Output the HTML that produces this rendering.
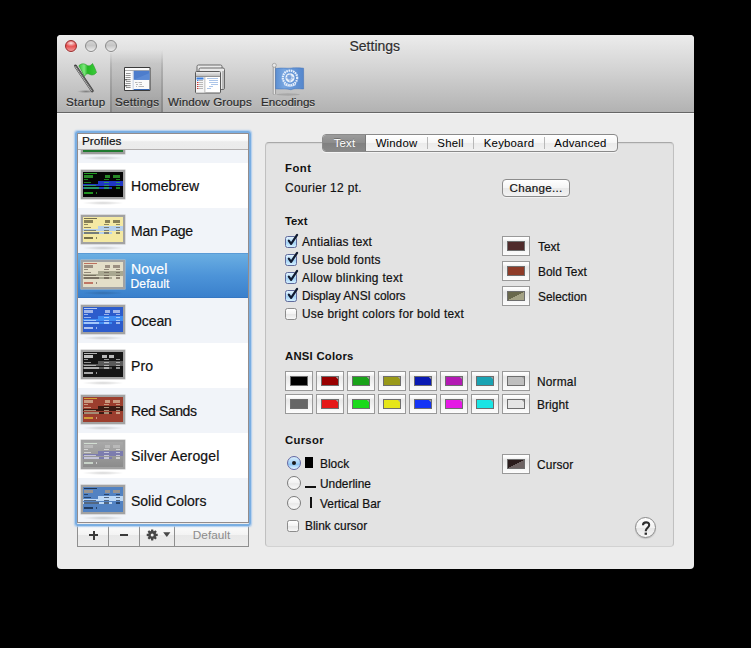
<!DOCTYPE html>
<html><head><meta charset="utf-8">
<style>
*{box-sizing:border-box}
html,body{margin:0;padding:0;width:751px;height:648px;background:#000;overflow:hidden;font-family:"Liberation Sans",sans-serif;color:#000}
.a{position:absolute}
.t{position:absolute;white-space:nowrap;line-height:1;-webkit-text-stroke:.2px currentColor}
.win{position:absolute;left:57px;top:35px;width:637px;height:534px;background:#ececec;border-radius:4px 4px 4px 4px;overflow:hidden}
.tb{position:absolute;left:57px;top:35px;width:637px;height:78px;box-shadow:0 1px 0 rgba(255,255,255,.55);background:linear-gradient(#ececec,#d3d3d3 45%,#b2b2b2);border-bottom:1px solid #666;border-radius:4px 4px 0 0}
.light{position:absolute;top:40px;width:12px;height:12px;border-radius:50%;box-shadow:0 .5px .5px rgba(255,255,255,.6)}
.tl{font-size:11.6px;color:#2a2a2a;text-shadow:0 1px 0 rgba(255,255,255,.45)}
/* profiles list */
.ring{position:absolute;left:75px;top:131px;width:176px;height:395px;border:2px solid #7aaee2;border-radius:3px;box-shadow:0 0 1.5px 0.5px #a9caee;z-index:2}
.list{position:absolute;left:77px;top:133px;width:172px;height:390px;background:#fff;overflow:hidden}
.lborder{position:absolute;left:77px;top:133px;width:172px;height:390px;border:1px solid #938c8c;z-index:1}
.hdr{position:absolute;left:0;top:0;width:172px;height:17px;background:linear-gradient(#ffffff,#fafafa 45%,#ececec 55%,#ebebeb);border-bottom:1px solid #b3b0b0}
.row{position:absolute;left:0;width:172px;height:45px}
.odd{background:#f1f4f9}
.thumb{position:absolute;left:4px;top:7px;width:44px;height:29px;border:2px solid #a2a2a2;box-shadow:inset 0 0 0 .5px #c8c8c8,0 0 0 .5px #c0c0c0}
.thumb>div{filter:blur(.25px)}
.shadow{position:absolute;left:5px;top:38px;width:42px;height:4px;border-radius:50%;background:radial-gradient(ellipse at center,rgba(0,0,0,.16),rgba(0,0,0,0) 70%)}
.pn{position:absolute;left:54px;letter-spacing:.15px;font-size:14px;color:#111}
/* buttons */
.seg{position:absolute;top:524px;height:23px;background:linear-gradient(#fdfdfd,#f3f3f3 50%,#e8e8e8 52%,#ececec);border:1px solid #8f8f8f;border-top:none}
/* tab box */
.box{position:absolute;left:265px;top:142px;width:409px;height:405px;background:#e3e3e3;border:1px solid #c0c0c0;border-top-color:#a8a8a8;border-bottom-color:#d2d2d2;border-radius:4px;box-shadow:inset 0 1px 1px rgba(0,0,0,.06)}
.tabs{position:absolute;left:322px;top:134px;width:296px;height:18px;border:1px solid #8a8a8a;border-radius:4px;background:linear-gradient(#ffffff,#f6f6f6 50%,#ebebeb 52%,#f2f2f2);overflow:hidden;box-shadow:0 1px 0 rgba(255,255,255,.6)}
.tab{position:absolute;top:0;height:16px;font-size:11.4px;text-align:center;line-height:16px;letter-spacing:.2px}
.h{font-size:11.3px;font-weight:bold;color:#111;-webkit-text-stroke:0}
.l{font-size:11.9px;color:#111}
.cb{position:absolute;width:12px;height:12px;border:1px solid #5f6a9c;border-radius:2.5px;background:linear-gradient(#e2f3fe,#b5dcf8 45%,#a6d4f7 55%,#d2eefe)}
.cbo{border-color:#8c8c8c;background:linear-gradient(#ffffff,#f3f3f3 50%,#e8e8e8 55%,#f7f7f7)}
.well{position:absolute;width:28px;height:20px;border:1px solid #999;background:linear-gradient(#ffffff 0,#fbfbfb 12%,#e8e8e8 28%,#eeeeee 50%,#f6f6f6 75%,#fcfcfc)}
.sw{position:absolute;left:4px;top:4px;width:18px;height:10px;border:1px solid #6e6e6e}
.aw{height:20px}
.aw .sw{top:4px;height:10px}
.radio{position:absolute;width:14px;height:14px;border-radius:50%;border:1px solid #7c7c7c;background:linear-gradient(#fdfdfd,#f2f2f2 50%,#e9e9e9 55%,#fafafa)}
</style></head><body>
<div class="win"></div>
<div class="tb"></div>
<!-- selected toolbar item -->
<div class="a" style="left:110px;top:50px;width:53px;height:62px;background:linear-gradient(rgba(0,0,0,0),rgba(0,0,0,.08) 22%,rgba(0,0,0,.12));"></div>
<div class="a" style="left:110px;top:50px;width:2px;height:62px;background:linear-gradient(rgba(0,0,0,0),rgba(0,0,0,.10) 30%,rgba(0,0,0,.14))"></div>
<div class="a" style="left:161px;top:50px;width:2px;height:62px;background:linear-gradient(rgba(0,0,0,0),rgba(0,0,0,.10) 30%,rgba(0,0,0,.14))"></div>
<div class="light" style="left:65px;background:radial-gradient(ellipse 60% 35% at 50% 22%,rgba(255,255,255,.85),rgba(255,255,255,0) 100%),linear-gradient(#d83a3a,#e64646 45%,#f09a9a);border:1px solid #9a2a2a"></div>
<div class="light" style="left:85px;background:linear-gradient(#d3d3d3,#c6c6c6 45%,#ececec);border:1px solid #8a8a8a"></div>
<div class="light" style="left:105px;background:linear-gradient(#d3d3d3,#c6c6c6 45%,#ececec);border:1px solid #8a8a8a"></div>
<div class="t" style="left:349.5px;top:38.5px;font-size:14px;color:#2e2e2e;text-shadow:0 1px 0 rgba(255,255,255,.5)">Settings</div>
<!-- ICONS -->

<svg class="a" style="left:66px;top:60px" width="36" height="36" viewBox="0 0 36 36">
  <defs>
    <linearGradient id="pole" x1="0" y1="0" x2="1" y2="0"><stop offset="0" stop-color="#f2f2f2"/><stop offset=".5" stop-color="#8a8a8a"/><stop offset="1" stop-color="#3a3a3a"/></linearGradient>
    <linearGradient id="gflag" x1="0" y1="0" x2="1" y2="0"><stop offset="0" stop-color="#2ec82e"/><stop offset=".3" stop-color="#7ee57e"/><stop offset=".5" stop-color="#22b822"/><stop offset="1" stop-color="#3ccc3c"/></linearGradient>
    <radialGradient id="fsh"><stop offset="0" stop-color="#000" stop-opacity=".35"/><stop offset="1" stop-color="#000" stop-opacity="0"/></radialGradient>
  </defs>
  <ellipse cx="20" cy="31.5" rx="9" ry="1.6" fill="url(#fsh)"/>
  <path d="M9.4 5.9 L26.3 30.9" stroke="#3e3e3e" stroke-width="2.8" stroke-linecap="round"/>
  <path d="M9.0 6.3 L25.7 31.0" stroke="#d8d8d8" stroke-width=".9" stroke-linecap="round" opacity=".9"/><path d="M9.9 6.0 L26.6 30.6" stroke="#777" stroke-width=".8"/>
  <path d="M12.8 5.8 C15 3.5 18 3.2 20.5 5 C22.5 6.5 24.5 6 26.5 3.5 C28 6 29.5 9.5 30.5 12.5 C28.5 15 26 15.5 24 14.5 C21.5 13 19.5 14 18.5 16.5 C16.8 12.8 14.8 9.2 12.8 5.8 Z" fill="url(#gflag)" stroke="#2a9a2a" stroke-width=".6"/>
</svg>
<svg class="a" style="left:122px;top:65px" width="30" height="28" viewBox="0 0 30 28">
  <rect x="2" y="2" width="26.5" height="24" rx="1.2" fill="#3a3a3a"/>
  <rect x="3" y="3" width="24.5" height="22" fill="#fafafa"/>
  <rect x="3" y="5" width="24.5" height=".8" fill="#9a9a9a"/>
  <rect x="10.6" y="5.8" width="1.1" height="19.2" fill="#c9d3e3"/>
  <rect x="11.7" y="5.8" width="15.8" height="9" fill="#4d7dcc"/>
  <path d="M11.7 14.8 L27.5 8 L27.5 14.8 Z" fill="#5b8ad4"/>
  <rect x="11.7" y="24" width="15.8" height="1" fill="#3467b8"/>
  <g fill="#6a6a6a"><rect x="4" y="8" width="4.6" height=".7"/><rect x="3.5" y="10.2" width="5.1" height=".7"/><rect x="3.5" y="12.2" width="5.1" height=".7"/><rect x="4.6" y="14.3" width="4" height=".8"/><rect x="4" y="16.2" width="4.6" height=".7"/><rect x="3.5" y="18.2" width="5.1" height=".7"/><rect x="4.6" y="20.3" width="4" height=".8"/><rect x="4" y="22.1" width="4.6" height=".7"/></g>
  <g fill="#222"><circle cx="4" cy="14.7" r=".8"/><circle cx="4" cy="20.7" r=".8"/></g>
  <g fill="#9c9c9c"><rect x="13" y="17" width="2.5" height=".7"/><rect x="16.5" y="17" width="3.5" height=".7"/><rect x="14" y="19" width="2" height=".7"/><rect x="17.5" y="19" width="2.5" height=".7"/><rect x="14" y="21" width="1" height=".7"/><rect x="16.5" y="21" width="5.5" height=".7"/></g>
</svg>
<svg class="a" style="left:192px;top:62px" width="36" height="34" viewBox="0 0 36 34">
  <defs><linearGradient id="wgt" x1="0" y1="0" x2="0" y2="1"><stop offset="0" stop-color="#ededed"/><stop offset="1" stop-color="#bdbdbd"/></linearGradient></defs>
  <rect x="5" y="3" width="25" height="21" rx="1.5" fill="url(#wgt)" stroke="#6a6a6a" stroke-width="1"/>
  <rect x="7" y="6" width="25.5" height="21.5" rx="1.5" fill="#e9e9e9" stroke="#6a6a6a" stroke-width="1"/>
  <rect x="30" y="9" width="2" height="18" fill="#bbb"/>
  <rect x="3.5" y="9.5" width="25" height="21.5" rx="1" fill="#fff" stroke="#5a5a5a" stroke-width="1"/>
  <rect x="4" y="10" width="24" height="4" fill="url(#wgt)"/>
  <rect x="4" y="14" width="24" height=".8" fill="#777"/>
  <rect x="4" y="15" width="8" height="15.5" fill="#f5f5f5"/>
  <rect x="12" y="15" width="1.5" height="15.5" fill="#d0d0d0"/>
  <rect x="4.5" y="15.5" width="7" height="2" fill="#3a7fe0"/>
  <g fill="#cc3333"><rect x="5" y="20" width="1.5" height="1"/><rect x="5" y="22" width="1.5" height="1"/><rect x="5" y="24" width="1.5" height="1"/><rect x="5" y="26" width="1.5" height="1"/></g>
  <rect x="5" y="18" width="1.5" height="1" fill="#3a7fe0"/>
  <g fill="#aaa"><rect x="7" y="18" width="4" height=".8"/><rect x="7" y="20" width="4" height=".8"/><rect x="7" y="22" width="4" height=".8"/><rect x="7" y="24" width="4" height=".8"/><rect x="7" y="26" width="4" height=".8"/></g>
  <g fill="#8aaee0"><rect x="15" y="16.3" width="11" height=".7"/><rect x="17" y="18.3" width="9" height=".7"/><rect x="17" y="20.3" width="9" height=".7"/><rect x="19" y="22.3" width="7" height=".7"/><rect x="17" y="24.3" width="4" height=".7"/><rect x="15" y="26.3" width="4" height=".7"/></g>
</svg>
<svg class="a" style="left:270px;top:62px" width="36" height="34" viewBox="0 0 36 34">
  <defs>
    <linearGradient id="upole" x1="0" y1="0" x2="1" y2="0"><stop offset="0" stop-color="#9a9a9a"/><stop offset=".5" stop-color="#f4f4f4"/><stop offset="1" stop-color="#8a8a8a"/></linearGradient>
    <linearGradient id="uflag" x1="0" y1="0" x2="1" y2="0"><stop offset="0" stop-color="#5c8fd2"/><stop offset=".3" stop-color="#78a6e0"/><stop offset=".6" stop-color="#6697d8"/><stop offset="1" stop-color="#5486cc"/></linearGradient>
  </defs>
  <ellipse cx="18" cy="32.5" rx="12" ry="1.2" fill="#000" opacity=".12"/>
  <rect x="3" y="4" width="2.6" height="28.5" rx="1" fill="url(#upole)" stroke="#888" stroke-width=".4"/>
  <circle cx="4.3" cy="3.3" r="2" fill="#e8e8e8" stroke="#8a8a8a" stroke-width=".6"/>
  <path d="M5.6 6.5 C12 5.5 16 6.5 20 6.2 C24 5.8 27 5.6 33.6 6.2 L33.6 27 C27 26.6 24 26.4 21 27.8 C17 26.3 12 27.3 5.6 26.8 Z" fill="url(#uflag)" stroke="#3f6fb5" stroke-width=".5"/>
  <circle cx="20" cy="15.8" r="7.2" fill="none" stroke="#f4f8ff" stroke-width="2.2" stroke-dasharray="1.6 .7" opacity=".9"/>
  <circle cx="20" cy="15.8" r="4.6" fill="#eef4fc"/>
  <path d="M15.6 15.8 H24.4 M20 11.2 V20.4" stroke="#7aa2da" stroke-width=".7"/>
  <circle cx="20" cy="15.8" r="2.4" fill="none" stroke="#7aa2da" stroke-width=".6"/>
  <path d="M17 13.5 L19 12.8 L21.5 14.5 L20.5 17.5 L18 17 Z" fill="#6a96d6" opacity=".8"/>
  <path d="M14 22.5 Q20 26 26 22.5" fill="none" stroke="#f4f8ff" stroke-width="1" opacity=".8"/>
</svg>

<div class="t tl" style="left:66px;top:96px;letter-spacing:.3px">Startup</div>
<div class="t tl" style="left:115px;top:96px;letter-spacing:.3px">Settings</div>
<div class="t tl" style="left:168px;top:96px;letter-spacing:.1px">Window Groups</div>
<div class="t tl" style="left:261px;top:96px">Encodings</div>

<!-- profiles -->
<div class="ring"></div><div class="lborder"></div>
<div class="list">
  <div class="row odd" style="top:-15px"><div class="thumb" style="background:#111;border-bottom-color:#9c9c9c"><div class="a" style="left:0;bottom:0;width:40px;height:3px;background:#1f7a30"></div></div><div class="shadow"></div></div>
  <div class="hdr"><div class="t" style="left:5px;top:2.6px;font-size:11.8px;color:#111">Profiles</div></div>
  <div class="row" style="top:30px"><div class="thumb"><div class="a" style="left:0;top:0;width:40px;height:25px;background:#050505;overflow:hidden"><div class="a" style="left:15px;top:9px;width:25px;height:2.8px;background:#1f36c4;opacity:1"></div><div class="a" style="left:0px;top:11.7px;width:40px;height:2.8px;background:#1f36c4;opacity:1"></div><div class="a" style="left:0px;top:14.5px;width:29px;height:2.6px;background:#1f36c4;opacity:1"></div><div class="a" style="left:1.4px;top:1.2px;width:12.5px;height:1.2px;background:#2fd22f;opacity:0.75"></div><div class="a" style="left:1.4px;top:3.3px;width:8.6px;height:2.6px;background:#3ee03e;opacity:0.6"></div><div class="a" style="left:21.9px;top:3.3px;width:5.4px;height:2.6px;background:#3ee03e;opacity:0.6"></div><div class="a" style="left:29.9px;top:3.3px;width:7px;height:2.6px;background:#3ee03e;opacity:0.6"></div><div class="a" style="left:1.4px;top:7px;width:3.6px;height:1.2px;background:#2fd22f;opacity:0.6"></div><div class="a" style="left:21.2px;top:7px;width:4.5px;height:1.2px;background:#2fd22f;opacity:0.6"></div><div class="a" style="left:33.4px;top:7px;width:3.5px;height:1.2px;background:#2fd22f;opacity:0.6"></div><div class="a" style="left:1.4px;top:10.2px;width:6.7px;height:1.2px;background:#2fd22f;opacity:0.6"></div><div class="a" style="left:21.2px;top:10.2px;width:4.5px;height:1.2px;background:#2fd22f;opacity:0.6"></div><div class="a" style="left:33.4px;top:10.2px;width:3.5px;height:1.2px;background:#2fd22f;opacity:0.6"></div><div class="a" style="left:1.4px;top:12.8px;width:11.9px;height:1.2px;background:#2fd22f;opacity:0.6"></div><div class="a" style="left:21.2px;top:12.8px;width:4.5px;height:1.2px;background:#2fd22f;opacity:0.6"></div><div class="a" style="left:33.4px;top:12.8px;width:3.5px;height:1.2px;background:#2fd22f;opacity:0.6"></div><div class="a" style="left:1.4px;top:15.4px;width:14.5px;height:1.2px;background:#2fd22f;opacity:0.6"></div><div class="a" style="left:21.2px;top:15.4px;width:4.5px;height:1.2px;background:#2fd22f;opacity:0.6"></div><div class="a" style="left:33.4px;top:15.4px;width:3.5px;height:1.2px;background:#2fd22f;opacity:0.6"></div><div class="a" style="left:1.4px;top:20.4px;width:9px;height:1.4px;background:#2fd22f;opacity:0.7"></div><div class="a" style="left:12.5px;top:20.4px;width:1.5px;height:1.4px;background:#2fd22f;opacity:0.6"></div></div></div><div class="shadow"></div><div class="t pn" style="top:16px;letter-spacing:0.06px">Homebrew</div></div><div class="row odd" style="top:75px"><div class="thumb"><div class="a" style="left:0;top:0;width:40px;height:25px;background:#f4e9a3;overflow:hidden"><div class="a" style="left:15px;top:9px;width:25px;height:2.8px;background:#b6d0ec;opacity:1"></div><div class="a" style="left:0px;top:11.7px;width:40px;height:2.8px;background:#b6d0ec;opacity:1"></div><div class="a" style="left:0px;top:14.5px;width:29px;height:2.6px;background:#b6d0ec;opacity:1"></div><div class="a" style="left:1.4px;top:1.2px;width:12.5px;height:1.2px;background:#4a4630;opacity:0.75"></div><div class="a" style="left:1.4px;top:3.3px;width:8.6px;height:2.6px;background:#3e3a24;opacity:0.6"></div><div class="a" style="left:21.9px;top:3.3px;width:5.4px;height:2.6px;background:#3e3a24;opacity:0.6"></div><div class="a" style="left:29.9px;top:3.3px;width:7px;height:2.6px;background:#3e3a24;opacity:0.6"></div><div class="a" style="left:1.4px;top:7px;width:3.6px;height:1.2px;background:#4a4630;opacity:0.6"></div><div class="a" style="left:21.2px;top:7px;width:4.5px;height:1.2px;background:#4a4630;opacity:0.6"></div><div class="a" style="left:33.4px;top:7px;width:3.5px;height:1.2px;background:#4a4630;opacity:0.6"></div><div class="a" style="left:1.4px;top:10.2px;width:6.7px;height:1.2px;background:#4a4630;opacity:0.6"></div><div class="a" style="left:21.2px;top:10.2px;width:4.5px;height:1.2px;background:#4a4630;opacity:0.6"></div><div class="a" style="left:33.4px;top:10.2px;width:3.5px;height:1.2px;background:#4a4630;opacity:0.6"></div><div class="a" style="left:1.4px;top:12.8px;width:11.9px;height:1.2px;background:#4a4630;opacity:0.6"></div><div class="a" style="left:21.2px;top:12.8px;width:4.5px;height:1.2px;background:#4a4630;opacity:0.6"></div><div class="a" style="left:33.4px;top:12.8px;width:3.5px;height:1.2px;background:#4a4630;opacity:0.6"></div><div class="a" style="left:1.4px;top:15.4px;width:14.5px;height:1.2px;background:#4a4630;opacity:0.6"></div><div class="a" style="left:21.2px;top:15.4px;width:4.5px;height:1.2px;background:#4a4630;opacity:0.6"></div><div class="a" style="left:33.4px;top:15.4px;width:3.5px;height:1.2px;background:#4a4630;opacity:0.6"></div><div class="a" style="left:1.4px;top:20.4px;width:9px;height:1.4px;background:#3e3a24;opacity:0.7"></div><div class="a" style="left:12.5px;top:20.4px;width:1.5px;height:1.4px;background:#4a4630;opacity:0.6"></div></div></div><div class="shadow"></div><div class="t pn" style="top:16px;letter-spacing:-0.25px">Man Page</div></div><div class="row" style="top:120px;background:linear-gradient(#6aaee2,#4d94d8 50%,#3a80cc);border-top:1px solid #5a9bd6;border-bottom:1px solid #3577c2"><div class="thumb" style="top:6px"><div class="a" style="left:0;top:0;width:40px;height:25px;background:#e3dec8;overflow:hidden"><div class="a" style="left:15px;top:9px;width:25px;height:2.8px;background:#a9a891;opacity:1"></div><div class="a" style="left:0px;top:11.7px;width:40px;height:2.8px;background:#a9a891;opacity:1"></div><div class="a" style="left:0px;top:14.5px;width:29px;height:2.6px;background:#a9a891;opacity:1"></div><div class="a" style="left:1.4px;top:1.2px;width:12.5px;height:1.2px;background:#b04a3a;opacity:0.75"></div><div class="a" style="left:1.4px;top:3.3px;width:8.6px;height:2.6px;background:#6a5a52;opacity:0.6"></div><div class="a" style="left:21.9px;top:3.3px;width:5.4px;height:2.6px;background:#6a5a52;opacity:0.6"></div><div class="a" style="left:29.9px;top:3.3px;width:7px;height:2.6px;background:#6a5a52;opacity:0.6"></div><div class="a" style="left:1.4px;top:7px;width:3.6px;height:1.2px;background:#5a4c42;opacity:0.6"></div><div class="a" style="left:21.2px;top:7px;width:4.5px;height:1.2px;background:#5a4c42;opacity:0.6"></div><div class="a" style="left:33.4px;top:7px;width:3.5px;height:1.2px;background:#5a4c42;opacity:0.6"></div><div class="a" style="left:1.4px;top:10.2px;width:6.7px;height:1.2px;background:#5a4c42;opacity:0.6"></div><div class="a" style="left:21.2px;top:10.2px;width:4.5px;height:1.2px;background:#5a4c42;opacity:0.6"></div><div class="a" style="left:33.4px;top:10.2px;width:3.5px;height:1.2px;background:#5a4c42;opacity:0.6"></div><div class="a" style="left:1.4px;top:12.8px;width:11.9px;height:1.2px;background:#5a4c42;opacity:0.6"></div><div class="a" style="left:21.2px;top:12.8px;width:4.5px;height:1.2px;background:#5a4c42;opacity:0.6"></div><div class="a" style="left:33.4px;top:12.8px;width:3.5px;height:1.2px;background:#5a4c42;opacity:0.6"></div><div class="a" style="left:1.4px;top:15.4px;width:14.5px;height:1.2px;background:#5a4c42;opacity:0.6"></div><div class="a" style="left:21.2px;top:15.4px;width:4.5px;height:1.2px;background:#5a4c42;opacity:0.6"></div><div class="a" style="left:33.4px;top:15.4px;width:3.5px;height:1.2px;background:#5a4c42;opacity:0.6"></div><div class="a" style="left:1.4px;top:20.4px;width:9px;height:1.4px;background:#b04a3a;opacity:0.7"></div><div class="a" style="left:12.5px;top:20.4px;width:1.5px;height:1.4px;background:#5a4c42;opacity:0.6"></div></div></div><div class="shadow" style="top:37px"></div><div class="t pn" style="top:8px;color:#fff">Novel</div><div class="t" style="left:53.5px;top:24px;font-size:12.1px;letter-spacing:.1px;color:#fff">Default</div></div><div class="row odd" style="top:165px"><div class="thumb"><div class="a" style="left:0;top:0;width:40px;height:25px;background:#2c5ccc;overflow:hidden"><div class="a" style="left:15px;top:9px;width:25px;height:2.8px;background:#3f8cf2;opacity:1"></div><div class="a" style="left:0px;top:11.7px;width:40px;height:2.8px;background:#3f8cf2;opacity:1"></div><div class="a" style="left:0px;top:14.5px;width:29px;height:2.6px;background:#3f8cf2;opacity:1"></div><div class="a" style="left:1.4px;top:1.2px;width:12.5px;height:1.2px;background:#e6eeff;opacity:0.75"></div><div class="a" style="left:1.4px;top:3.3px;width:8.6px;height:2.6px;background:#f0f4ff;opacity:0.6"></div><div class="a" style="left:21.9px;top:3.3px;width:5.4px;height:2.6px;background:#f0f4ff;opacity:0.6"></div><div class="a" style="left:29.9px;top:3.3px;width:7px;height:2.6px;background:#f0f4ff;opacity:0.6"></div><div class="a" style="left:1.4px;top:7px;width:3.6px;height:1.2px;background:#e6eeff;opacity:0.6"></div><div class="a" style="left:21.2px;top:7px;width:4.5px;height:1.2px;background:#e6eeff;opacity:0.6"></div><div class="a" style="left:33.4px;top:7px;width:3.5px;height:1.2px;background:#e6eeff;opacity:0.6"></div><div class="a" style="left:1.4px;top:10.2px;width:6.7px;height:1.2px;background:#e6eeff;opacity:0.6"></div><div class="a" style="left:21.2px;top:10.2px;width:4.5px;height:1.2px;background:#e6eeff;opacity:0.6"></div><div class="a" style="left:33.4px;top:10.2px;width:3.5px;height:1.2px;background:#e6eeff;opacity:0.6"></div><div class="a" style="left:1.4px;top:12.8px;width:11.9px;height:1.2px;background:#e6eeff;opacity:0.6"></div><div class="a" style="left:21.2px;top:12.8px;width:4.5px;height:1.2px;background:#e6eeff;opacity:0.6"></div><div class="a" style="left:33.4px;top:12.8px;width:3.5px;height:1.2px;background:#e6eeff;opacity:0.6"></div><div class="a" style="left:1.4px;top:15.4px;width:14.5px;height:1.2px;background:#e6eeff;opacity:0.6"></div><div class="a" style="left:21.2px;top:15.4px;width:4.5px;height:1.2px;background:#e6eeff;opacity:0.6"></div><div class="a" style="left:33.4px;top:15.4px;width:3.5px;height:1.2px;background:#e6eeff;opacity:0.6"></div><div class="a" style="left:1.4px;top:20.4px;width:9px;height:1.4px;background:#e6eeff;opacity:0.7"></div><div class="a" style="left:12.5px;top:20.4px;width:1.5px;height:1.4px;background:#e6eeff;opacity:0.6"></div></div></div><div class="shadow"></div><div class="t pn" style="top:16px;letter-spacing:-0.1px">Ocean</div></div><div class="row" style="top:210px"><div class="thumb"><div class="a" style="left:0;top:0;width:40px;height:25px;background:#161616;overflow:hidden"><div class="a" style="left:15px;top:9px;width:25px;height:2.8px;background:#5a5a5a;opacity:1"></div><div class="a" style="left:0px;top:11.7px;width:40px;height:2.8px;background:#5a5a5a;opacity:1"></div><div class="a" style="left:0px;top:14.5px;width:29px;height:2.6px;background:#5a5a5a;opacity:1"></div><div class="a" style="left:1.4px;top:1.2px;width:12.5px;height:1.2px;background:#e8e8e8;opacity:0.75"></div><div class="a" style="left:1.4px;top:2.8px;width:9px;height:3.4px;background:#f0f0f0;opacity:0.8"></div><div class="a" style="left:19px;top:3.3px;width:5px;height:2.4px;background:#f0f0f0;opacity:0.75"></div><div class="a" style="left:25.5px;top:3.3px;width:5.5px;height:2.4px;background:#f0f0f0;opacity:0.75"></div><div class="a" style="left:1.4px;top:7px;width:3.6px;height:1.2px;background:#e8e8e8;opacity:0.6"></div><div class="a" style="left:21.2px;top:7px;width:4.5px;height:1.2px;background:#e8e8e8;opacity:0.6"></div><div class="a" style="left:33.4px;top:7px;width:3.5px;height:1.2px;background:#e8e8e8;opacity:0.6"></div><div class="a" style="left:1.4px;top:10.2px;width:6.7px;height:1.2px;background:#e8e8e8;opacity:0.6"></div><div class="a" style="left:21.2px;top:10.2px;width:4.5px;height:1.2px;background:#e8e8e8;opacity:0.6"></div><div class="a" style="left:33.4px;top:10.2px;width:3.5px;height:1.2px;background:#e8e8e8;opacity:0.6"></div><div class="a" style="left:1.4px;top:12.8px;width:11.9px;height:1.2px;background:#e8e8e8;opacity:0.6"></div><div class="a" style="left:21.2px;top:12.8px;width:4.5px;height:1.2px;background:#e8e8e8;opacity:0.6"></div><div class="a" style="left:33.4px;top:12.8px;width:3.5px;height:1.2px;background:#e8e8e8;opacity:0.6"></div><div class="a" style="left:1.4px;top:15.4px;width:14.5px;height:1.2px;background:#e8e8e8;opacity:0.6"></div><div class="a" style="left:21.2px;top:15.4px;width:4.5px;height:1.2px;background:#e8e8e8;opacity:0.6"></div><div class="a" style="left:33.4px;top:15.4px;width:3.5px;height:1.2px;background:#e8e8e8;opacity:0.6"></div><div class="a" style="left:1.4px;top:20.4px;width:9px;height:1.4px;background:#e8e8e8;opacity:0.7"></div><div class="a" style="left:12.5px;top:20.4px;width:1.5px;height:1.4px;background:#e8e8e8;opacity:0.6"></div></div></div><div class="shadow"></div><div class="t pn" style="top:16px;letter-spacing:0.15px">Pro</div></div><div class="row odd" style="top:255px"><div class="thumb"><div class="a" style="left:0;top:0;width:40px;height:25px;background:#9c3e2e;overflow:hidden"><div class="a" style="left:15px;top:9px;width:25px;height:2.8px;background:#3a1a12;opacity:1"></div><div class="a" style="left:0px;top:11.7px;width:40px;height:2.8px;background:#3a1a12;opacity:1"></div><div class="a" style="left:0px;top:14.5px;width:29px;height:2.6px;background:#3a1a12;opacity:1"></div><div class="a" style="left:1.4px;top:1.2px;width:12.5px;height:1.2px;background:#e8c23a;opacity:0.75"></div><div class="a" style="left:1.4px;top:3.3px;width:8.6px;height:2.6px;background:#eadbb8;opacity:0.6"></div><div class="a" style="left:21.9px;top:3.3px;width:5.4px;height:2.6px;background:#eadbb8;opacity:0.6"></div><div class="a" style="left:29.9px;top:3.3px;width:7px;height:2.6px;background:#eadbb8;opacity:0.6"></div><div class="a" style="left:1.4px;top:7px;width:3.6px;height:1.2px;background:#eadbb8;opacity:0.6"></div><div class="a" style="left:21.2px;top:7px;width:4.5px;height:1.2px;background:#eadbb8;opacity:0.6"></div><div class="a" style="left:33.4px;top:7px;width:3.5px;height:1.2px;background:#eadbb8;opacity:0.6"></div><div class="a" style="left:1.4px;top:10.2px;width:6.7px;height:1.2px;background:#eadbb8;opacity:0.6"></div><div class="a" style="left:21.2px;top:10.2px;width:4.5px;height:1.2px;background:#eadbb8;opacity:0.6"></div><div class="a" style="left:33.4px;top:10.2px;width:3.5px;height:1.2px;background:#eadbb8;opacity:0.6"></div><div class="a" style="left:1.4px;top:12.8px;width:11.9px;height:1.2px;background:#eadbb8;opacity:0.6"></div><div class="a" style="left:21.2px;top:12.8px;width:4.5px;height:1.2px;background:#eadbb8;opacity:0.6"></div><div class="a" style="left:33.4px;top:12.8px;width:3.5px;height:1.2px;background:#eadbb8;opacity:0.6"></div><div class="a" style="left:1.4px;top:15.4px;width:14.5px;height:1.2px;background:#eadbb8;opacity:0.6"></div><div class="a" style="left:21.2px;top:15.4px;width:4.5px;height:1.2px;background:#eadbb8;opacity:0.6"></div><div class="a" style="left:33.4px;top:15.4px;width:3.5px;height:1.2px;background:#eadbb8;opacity:0.6"></div><div class="a" style="left:1.4px;top:20.4px;width:9px;height:1.4px;background:#e8c23a;opacity:0.7"></div><div class="a" style="left:12.5px;top:20.4px;width:1.5px;height:1.4px;background:#eadbb8;opacity:0.6"></div></div></div><div class="shadow"></div><div class="t pn" style="top:16px;letter-spacing:-0.42px">Red Sands</div></div><div class="row" style="top:300px"><div class="thumb"><div class="a" style="left:0;top:0;width:40px;height:25px;background:linear-gradient(#a9a9a9,#8c8c8c);overflow:hidden"><div class="a" style="left:15px;top:9px;width:25px;height:2.8px;background:#7c7cae;opacity:1"></div><div class="a" style="left:0px;top:11.7px;width:40px;height:2.8px;background:#7c7cae;opacity:1"></div><div class="a" style="left:0px;top:14.5px;width:29px;height:2.6px;background:#7c7cae;opacity:1"></div><div class="a" style="left:1.4px;top:1.2px;width:12.5px;height:1.2px;background:#e0f0e0;opacity:0.75"></div><div class="a" style="left:1.4px;top:3.3px;width:8.6px;height:2.6px;background:#c8c8c8;opacity:0.6"></div><div class="a" style="left:21.9px;top:3.3px;width:5.4px;height:2.6px;background:#c8c8c8;opacity:0.6"></div><div class="a" style="left:29.9px;top:3.3px;width:7px;height:2.6px;background:#c8c8c8;opacity:0.6"></div><div class="a" style="left:1.4px;top:7px;width:3.6px;height:1.2px;background:#f4f4f4;opacity:0.6"></div><div class="a" style="left:21.2px;top:7px;width:4.5px;height:1.2px;background:#f4f4f4;opacity:0.6"></div><div class="a" style="left:33.4px;top:7px;width:3.5px;height:1.2px;background:#f4f4f4;opacity:0.6"></div><div class="a" style="left:1.4px;top:10.2px;width:6.7px;height:1.2px;background:#f4f4f4;opacity:0.6"></div><div class="a" style="left:21.2px;top:10.2px;width:4.5px;height:1.2px;background:#f4f4f4;opacity:0.6"></div><div class="a" style="left:33.4px;top:10.2px;width:3.5px;height:1.2px;background:#f4f4f4;opacity:0.6"></div><div class="a" style="left:1.4px;top:12.8px;width:11.9px;height:1.2px;background:#f4f4f4;opacity:0.6"></div><div class="a" style="left:21.2px;top:12.8px;width:4.5px;height:1.2px;background:#f4f4f4;opacity:0.6"></div><div class="a" style="left:33.4px;top:12.8px;width:3.5px;height:1.2px;background:#f4f4f4;opacity:0.6"></div><div class="a" style="left:1.4px;top:15.4px;width:14.5px;height:1.2px;background:#f4f4f4;opacity:0.6"></div><div class="a" style="left:21.2px;top:15.4px;width:4.5px;height:1.2px;background:#f4f4f4;opacity:0.6"></div><div class="a" style="left:33.4px;top:15.4px;width:3.5px;height:1.2px;background:#f4f4f4;opacity:0.6"></div><div class="a" style="left:1.4px;top:20.4px;width:9px;height:1.4px;background:#e0f0e0;opacity:0.7"></div><div class="a" style="left:12.5px;top:20.4px;width:1.5px;height:1.4px;background:#f4f4f4;opacity:0.6"></div></div></div><div class="shadow"></div><div class="t pn" style="top:16px;letter-spacing:0.15px">Silver Aerogel</div></div><div class="row odd" style="top:345px"><div class="thumb"><div class="a" style="left:0;top:0;width:40px;height:25px;background:#5282c2;overflow:hidden"><div class="a" style="left:15px;top:9px;width:25px;height:2.8px;background:#bcd8f6;opacity:1"></div><div class="a" style="left:0px;top:11.7px;width:40px;height:2.8px;background:#bcd8f6;opacity:1"></div><div class="a" style="left:0px;top:14.5px;width:29px;height:2.6px;background:#bcd8f6;opacity:1"></div><div class="a" style="left:1.4px;top:1.2px;width:12.5px;height:1.2px;background:#0e1c34;opacity:0.75"></div><div class="a" style="left:1.4px;top:3.3px;width:8.6px;height:2.6px;background:#c8a070;opacity:0.6"></div><div class="a" style="left:21.9px;top:3.3px;width:5.4px;height:2.6px;background:#c8a070;opacity:0.6"></div><div class="a" style="left:29.9px;top:3.3px;width:7px;height:2.6px;background:#c8a070;opacity:0.6"></div><div class="a" style="left:1.4px;top:7px;width:3.6px;height:1.2px;background:#0e1c34;opacity:0.6"></div><div class="a" style="left:21.2px;top:7px;width:4.5px;height:1.2px;background:#0e1c34;opacity:0.6"></div><div class="a" style="left:33.4px;top:7px;width:3.5px;height:1.2px;background:#0e1c34;opacity:0.6"></div><div class="a" style="left:1.4px;top:10.2px;width:6.7px;height:1.2px;background:#0e1c34;opacity:0.6"></div><div class="a" style="left:21.2px;top:10.2px;width:4.5px;height:1.2px;background:#0e1c34;opacity:0.6"></div><div class="a" style="left:33.4px;top:10.2px;width:3.5px;height:1.2px;background:#0e1c34;opacity:0.6"></div><div class="a" style="left:1.4px;top:12.8px;width:11.9px;height:1.2px;background:#0e1c34;opacity:0.6"></div><div class="a" style="left:21.2px;top:12.8px;width:4.5px;height:1.2px;background:#0e1c34;opacity:0.6"></div><div class="a" style="left:33.4px;top:12.8px;width:3.5px;height:1.2px;background:#0e1c34;opacity:0.6"></div><div class="a" style="left:1.4px;top:15.4px;width:14.5px;height:1.2px;background:#0e1c34;opacity:0.6"></div><div class="a" style="left:21.2px;top:15.4px;width:4.5px;height:1.2px;background:#0e1c34;opacity:0.6"></div><div class="a" style="left:33.4px;top:15.4px;width:3.5px;height:1.2px;background:#0e1c34;opacity:0.6"></div><div class="a" style="left:1.4px;top:20.4px;width:9px;height:1.4px;background:#0e1c34;opacity:0.7"></div><div class="a" style="left:12.5px;top:20.4px;width:1.5px;height:1.4px;background:#0e1c34;opacity:0.6"></div></div></div><div class="shadow"></div><div class="t pn" style="top:16px;letter-spacing:0px">Solid Colors</div></div>
</div>
<div class="seg" style="left:77px;width:32px"><div class="a" style="left:11px;top:10px;width:9px;height:2px;background:#3a3a3a"></div><div class="a" style="left:14.5px;top:6.5px;width:2px;height:9px;background:#3a3a3a"></div></div>
<div class="seg" style="left:108px;width:32px"><div class="a" style="left:11px;top:10px;width:8.3px;height:2px;background:#3a3a3a"></div></div>
<div class="seg" style="left:139px;width:36px"><svg class="a" style="left:0;top:0" width="36" height="23" viewBox="0 0 36 23"><g transform="translate(12.2,10.9)"><path d="M3.80 -1.26 L5.50 -1.06 L5.50 1.06 L3.80 1.26 L3.57 1.80 L4.64 3.14 L3.14 4.64 L1.80 3.57 L1.26 3.80 L1.06 5.50 L-1.06 5.50 L-1.26 3.80 L-1.80 3.57 L-3.14 4.64 L-4.64 3.14 L-3.57 1.80 L-3.80 1.26 L-5.50 1.06 L-5.50 -1.06 L-3.80 -1.26 L-3.57 -1.80 L-4.64 -3.14 L-3.14 -4.64 L-1.80 -3.57 L-1.26 -3.80 L-1.06 -5.50 L1.06 -5.50 L1.26 -3.80 L1.80 -3.57 L3.14 -4.64 L4.64 -3.14 L3.57 -1.80 Z" fill="#474747"/><circle r="1.5" fill="#f2f2f2"/></g><path d="M23.2 8.2 L30.4 8.2 L26.8 13 Z" fill="#474747"/></svg></div>
<div class="seg" style="left:174px;width:75px"><div class="t" style="left:0;width:73px;text-align:center;top:6px;font-size:11.8px;color:#8c8c8c;-webkit-text-stroke:0">Default</div></div>

<!-- tab box -->
<div class="box"></div>
<div class="tabs">
  <div class="tab" style="left:0;width:43px;background:linear-gradient(#9b9b9b,#8c8c8c 50%,#808080 52%,#888);box-shadow:inset -1px 0 0 #7a7a7a;color:#fff;text-shadow:0 -1px 0 rgba(0,0,0,.3)">Text</div>
  <div class="tab" style="left:43px;width:61px">Window</div>
  <div class="a" style="left:104px;top:2px;width:1px;height:12px;background:#b8b8b8"></div><div class="tab" style="left:105px;width:45px">Shell</div>
  <div class="a" style="left:150px;top:2px;width:1px;height:12px;background:#b8b8b8"></div><div class="tab" style="left:151px;width:70px">Keyboard</div>
  <div class="a" style="left:221px;top:2px;width:1px;height:12px;background:#b8b8b8"></div><div class="tab" style="left:222px;width:71px">Advanced</div>
</div>

<!-- Font -->
<div class="t h" style="left:285px;top:163px;letter-spacing:.5px">Font</div>
<div class="t l" style="left:285px;top:183px;letter-spacing:.35px">Courier 12 pt.</div>
<div class="a" style="left:502px;top:179px;width:68px;height:18px;border:1px solid #8c8c8c;border-radius:4px;background:linear-gradient(#ffffff,#f4f4f4 50%,#e8e8e8 52%,#f3f3f3);box-shadow:0 1px 0 rgba(255,255,255,.5)"><div class="t" style="left:0;width:66px;text-align:center;top:2px;font-size:11.6px;letter-spacing:.3px;color:#111">Change...</div></div>

<!-- Text section -->
<div class="t h" style="left:285px;top:216px">Text</div>
<div class="cb" style="left:285px;top:236px"><svg class="a" style="left:1px;top:-4px" width="13" height="14" viewBox="0 0 13 14"><path d="M1.8 7.6 L4.1 10.9 L10.1 1.8" fill="none" stroke="#101a30" stroke-width="2.2" stroke-linecap="round" stroke-linejoin="round"/></svg></div><div class="t l" style="left:302px;top:237px;letter-spacing:0.19px">Antialias text</div><div class="cb" style="left:285px;top:254px"><svg class="a" style="left:1px;top:-4px" width="13" height="14" viewBox="0 0 13 14"><path d="M1.8 7.6 L4.1 10.9 L10.1 1.8" fill="none" stroke="#101a30" stroke-width="2.2" stroke-linecap="round" stroke-linejoin="round"/></svg></div><div class="t l" style="left:302px;top:255px;letter-spacing:0.18px">Use bold fonts</div><div class="cb" style="left:285px;top:272px"><svg class="a" style="left:1px;top:-4px" width="13" height="14" viewBox="0 0 13 14"><path d="M1.8 7.6 L4.1 10.9 L10.1 1.8" fill="none" stroke="#101a30" stroke-width="2.2" stroke-linecap="round" stroke-linejoin="round"/></svg></div><div class="t l" style="left:302px;top:273px;letter-spacing:0.34px">Allow blinking text</div><div class="cb" style="left:285px;top:290px"><svg class="a" style="left:1px;top:-4px" width="13" height="14" viewBox="0 0 13 14"><path d="M1.8 7.6 L4.1 10.9 L10.1 1.8" fill="none" stroke="#101a30" stroke-width="2.2" stroke-linecap="round" stroke-linejoin="round"/></svg></div><div class="t l" style="left:302px;top:291px;letter-spacing:-0.05px">Display ANSI colors</div><div class="cb cbo" style="left:285px;top:308px"></div><div class="t l" style="left:302px;top:309px;letter-spacing:0.24px">Use bright colors for bold text</div>

<div class="well" style="left:502px;top:236px"><div class="sw" style="background:#502b2b"></div></div>
<div class="t l" style="left:538px;top:242px">Text</div>
<div class="well" style="left:502px;top:261px"><div class="sw" style="background:#8e3b28"></div></div>
<div class="t l" style="left:538px;top:267px">Bold Text</div>
<div class="well" style="left:502px;top:286px"><div class="sw" style="background:linear-gradient(to bottom right,#69684c 50%,#a4a285 50%)"></div></div>
<div class="t l" style="left:538px;top:292px">Selection</div>

<!-- ANSI -->
<div class="t h" style="left:285px;top:351px;letter-spacing:.25px">ANSI Colors</div>
<div class="well aw" style="left:285px;top:371px"><div class="sw" style="background:#000000"></div></div><div class="well aw" style="left:316px;top:371px"><div class="sw" style="background:linear-gradient(225deg,#a0a0a0 0,#a0a0a0 1.2px,transparent 1.9px),#990000"></div></div><div class="well aw" style="left:347px;top:371px"><div class="sw" style="background:linear-gradient(225deg,#a0a0a0 0,#a0a0a0 1.2px,transparent 1.9px),#1aa31a"></div></div><div class="well aw" style="left:378px;top:371px"><div class="sw" style="background:linear-gradient(225deg,#a0a0a0 0,#a0a0a0 1.2px,transparent 1.9px),#999919"></div></div><div class="well aw" style="left:409px;top:371px"><div class="sw" style="background:linear-gradient(225deg,#a0a0a0 0,#a0a0a0 1.2px,transparent 1.9px),#0a1ab3"></div></div><div class="well aw" style="left:440px;top:371px"><div class="sw" style="background:linear-gradient(225deg,#a0a0a0 0,#a0a0a0 1.2px,transparent 1.9px),#b31ab3"></div></div><div class="well aw" style="left:471px;top:371px"><div class="sw" style="background:linear-gradient(225deg,#a0a0a0 0,#a0a0a0 1.2px,transparent 1.9px),#1aa3b3"></div></div><div class="well aw" style="left:502px;top:371px"><div class="sw" style="background:linear-gradient(225deg,#a0a0a0 0,#a0a0a0 1.2px,transparent 1.9px),#bfbfbf"></div></div><div class="well aw" style="left:285px;top:394px"><div class="sw" style="background:#666666"></div></div><div class="well aw" style="left:316px;top:394px"><div class="sw" style="background:linear-gradient(225deg,#a0a0a0 0,#a0a0a0 1.2px,transparent 1.9px),#e51919"></div></div><div class="well aw" style="left:347px;top:394px"><div class="sw" style="background:linear-gradient(225deg,#a0a0a0 0,#a0a0a0 1.2px,transparent 1.9px),#1ad91a"></div></div><div class="well aw" style="left:378px;top:394px"><div class="sw" style="background:linear-gradient(225deg,#a0a0a0 0,#a0a0a0 1.2px,transparent 1.9px),#e5e519"></div></div><div class="well aw" style="left:409px;top:394px"><div class="sw" style="background:linear-gradient(225deg,#a0a0a0 0,#a0a0a0 1.2px,transparent 1.9px),#1434f5"></div></div><div class="well aw" style="left:440px;top:394px"><div class="sw" style="background:linear-gradient(225deg,#a0a0a0 0,#a0a0a0 1.2px,transparent 1.9px),#e519e5"></div></div><div class="well aw" style="left:471px;top:394px"><div class="sw" style="background:linear-gradient(225deg,#a0a0a0 0,#a0a0a0 1.2px,transparent 1.9px),#1ae5e5"></div></div><div class="well aw" style="left:502px;top:394px"><div class="sw" style="background:linear-gradient(225deg,#a0a0a0 0,#a0a0a0 1.2px,transparent 1.9px),#e5e5e5"></div></div>
<div class="t l" style="left:537px;top:377px;letter-spacing:.2px">Normal</div>
<div class="t l" style="left:537px;top:400px;letter-spacing:.1px">Bright</div>

<!-- Cursor -->
<div class="t h" style="left:285px;top:435px;letter-spacing:.3px">Cursor</div>
<div class="radio" style="left:287px;top:456px;border-color:#6468a4;background:linear-gradient(#d8eefc,#a4d0f6 50%,#8cc4f4 60%,#e6f6ff)"><div class="a" style="left:4px;top:4px;width:4px;height:4px;border-radius:50%;background:#1a1a1a"></div></div><div class="a" style="left:305px;top:457px;width:8px;height:11px;background:#000"></div><div class="t l" style="left:320px;top:459px">Block</div><div class="radio" style="left:287px;top:476px"></div><div class="a" style="left:305px;top:486.3px;width:11px;height:1.6px;background:#111"></div><div class="t l" style="left:320px;top:479px">Underline</div><div class="radio" style="left:287px;top:496px"></div><div class="a" style="left:310.2px;top:497px;width:1.7px;height:11px;background:#111"></div><div class="t l" style="left:320px;top:499px">Vertical Bar</div><div class="cb cbo" style="left:287px;top:520px"></div><div class="t l" style="left:305px;top:521px">Blink cursor</div>
<div class="well" style="left:502px;top:454px"><div class="sw" style="background:linear-gradient(to bottom right,#2a1c1c 50%,#6e6464 50%)"></div></div>
<div class="t l" style="left:537px;top:460px;letter-spacing:.1px">Cursor</div>

<!-- help -->
<div class="a" style="left:635px;top:517px;width:21px;height:21px;border-radius:50%;border:1px solid #8a8a8a;background:linear-gradient(#ffffff,#f2f2f2 50%,#e6e6e6 52%,#f7f7f7);box-shadow:0 1px 1px rgba(0,0,0,.15)"><svg class="a" style="left:-7px;top:-7px" width="36" height="36" viewBox="0 0 36 36"><path d="M14 14.3 C14 10.5 20.2 10.3 20.2 14 C20.2 16.6 16.9 16.9 16.8 19.8 L16.8 20.3" fill="none" stroke="#2e2e2e" stroke-width="2.1"/><rect x="15.6" y="21.6" width="2.4" height="2.2" fill="#2e2e2e"/></svg></div>
</body></html>
